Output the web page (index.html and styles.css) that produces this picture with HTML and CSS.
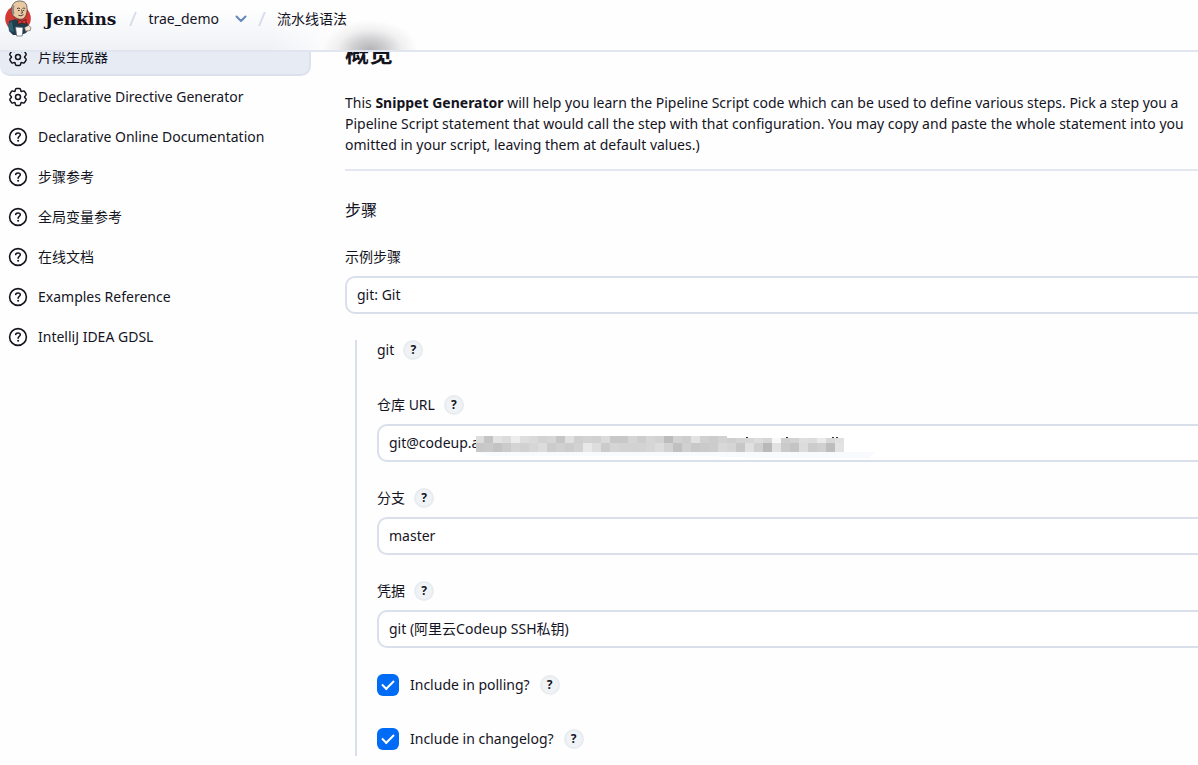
FILE: index.html
```html
<!DOCTYPE html>
<html lang="zh-CN">
<head>
    <meta charset="UTF-8">
    <meta name="viewport" content="width=device-width, initial-scale=1.0">
    <title>流水线语法 - Jenkins</title>
    <link rel="stylesheet" href="styles.css">
</head>
<body>

<!-- shared icons -->
<svg class="sprite" aria-hidden="true">
    <symbol id="icon-gear" viewBox="-10 -10 20 20">
        <g fill="none" stroke="currentColor" stroke-width="1.5" stroke-linecap="round">
            <path id="lobe" d="M-3.300-5.700C-2.200-6.300-3.200-8.500-1.400-8.500H1.400C3.200-8.500 2.200-6.300 3.300-5.700"/>
            <use href="#lobe" transform="rotate(60)"/>
            <use href="#lobe" transform="rotate(120)"/>
            <use href="#lobe" transform="rotate(180)"/>
            <use href="#lobe" transform="rotate(240)"/>
            <use href="#lobe" transform="rotate(300)"/>
            <circle r="2.500"/>
        </g>
    </symbol>
    <symbol id="icon-help" viewBox="0 0 20 20">
        <circle cx="10" cy="10" r="8.4" fill="none" stroke="currentColor" stroke-width="1.6"/>
        <path fill="none" stroke="currentColor" stroke-width="1.5" stroke-linecap="round" stroke-linejoin="round" d="M7.7 7.6C7.8 6.4 8.8 5.9 10 5.9c1.300 0 2.300.8 2.300 1.900 0 1.600-2.200 1.700-2.200 3.500"/>
        <circle cx="10.100" cy="13.800" r="1" fill="currentColor"/>
    </symbol>
</svg>

<header class="header">
    <a class="brand" href="#">
        <svg class="logo" viewBox="0 0 28 38" aria-hidden="true">
            <ellipse cx="14" cy="18.500" rx="12.800" ry="13" fill="#d33833"/>
            <path fill="#1f3d4a" d="M5 21l7-2 4 4 5-2 3 3 1 5-3 4-5 2-8 0-4-4z"/>
            <path fill="#2f5f70" d="M4 24l4-3 2 11-5-1z"/>
            <path fill="#e8c9a3" stroke="#3a322d" stroke-width=".7" d="M8.500 15C6.500 11 7 5 11 2.200c3.200-2 8.500-1.500 10.600 1 2.200 3 1.700 8.800.4 12-1 3-3.500 4.500-6.500 4-2.500-.4-5-1.800-7-4.200z"/>
            <path fill="#8f8983" d="M9.500 5C7.500 7 7 12 9 15.500l1.500-2.500c-1-2.500-.5-5 0-7z"/>
            <path fill="none" stroke="#2b2522" stroke-width=".8" d="M13 8.600q1.500-1 3 0M18.500 8.500q1.300-1 2.700 0M14 10.500h1.700M19 10.500h1.300M17.500 9.500l1 3.500-1.600.3M14.500 15.300q2.500 1.300 5-.6"/>
            <path fill="#d33833" stroke="#461817" stroke-width=".7" d="M14 19.500l4 1.800 4-2v5l-4-1.600-4 1.600z"/>
            <path fill="#fff" stroke="#59666b" stroke-width=".7" d="M11.500 27l7.500.5-.8 8.500h-5.500z"/>
            <path fill="#efe4d6" stroke="#59504a" stroke-width=".6" d="M20.500 27.500l4-2 2.500 2-.7 3-4.800.7z"/>
        </svg>
        <span>Jenkins</span>
    </a>
    <nav class="crumbs">
        <span class="slash"></span>
        <a href="#">trae_demo</a>
        <button class="chevron" type="button" aria-label="trae_demo">
            <svg viewBox="0 0 12 8" aria-hidden="true"><path d="M1.500 1.500L6 6l4.500-4.500"/></svg>
        </button>
        <span class="slash"></span>
        <a href="#">流水线语法</a>
    </nav>
</header>

<div class="page">
    <nav class="sidebar">
        <a class="task active" href="#"><svg><use href="#icon-gear"/></svg>片段生成器</a>
        <a class="task" href="#"><svg><use href="#icon-gear"/></svg>Declarative Directive Generator</a>
        <a class="task" href="#"><svg><use href="#icon-help"/></svg>Declarative Online Documentation</a>
        <a class="task" href="#"><svg><use href="#icon-help"/></svg>步骤参考</a>
        <a class="task" href="#"><svg><use href="#icon-help"/></svg>全局变量参考</a>
        <a class="task" href="#"><svg><use href="#icon-help"/></svg>在线文档</a>
        <a class="task" href="#"><svg><use href="#icon-help"/></svg>Examples Reference</a>
        <a class="task" href="#"><svg><use href="#icon-help"/></svg>IntelliJ IDEA GDSL</a>
    </nav>

    <main class="main">
        <h1>概览</h1>
        <p class="intro">This <b>Snippet Generator</b> will help you learn the Pipeline Script code which can be used to define various steps. Pick a step you a<br>
            Pipeline Script statement that would call the step with that configuration. You may copy and paste the whole statement into you<br>
            omitted in your script, leaving them at default values.)</p>

        <form class="form">
            <h2>步骤</h2>
            <div class="field">
                <label class="label" for="step">示例步骤</label>
                <select class="control" id="step">
                    <option>git: Git</option>
                </select>
            </div>

            <div class="nested">
                <div class="label title">git <button class="help" type="button">?</button></div>

                <div class="field">
                    <div class="label"><label for="url">仓库 URL</label> <button class="help" type="button">?</button></div>
                    <div class="masked">
                        <input class="control" type="text" id="url" value="git@codeup.a">
                        <svg class="mosaic" viewBox="0 0 400 24" aria-hidden="true"></svg>
                    </div>
                </div>

                <div class="field">
                    <div class="label"><label for="branch">分支</label> <button class="help" type="button">?</button></div>
                    <input class="control" type="text" id="branch" value="master">
                </div>

                <div class="field">
                    <div class="label"><label for="credentials">凭据</label> <button class="help" type="button">?</button></div>
                    <select class="control" id="credentials">
                        <option>git (阿里云Codeup SSH私钥)</option>
                    </select>
                </div>

                <div class="check">
                    <input type="checkbox" id="poll" checked>
                    <label for="poll">Include in polling?</label>
                    <button class="help" type="button">?</button>
                </div>
                <div class="check">
                    <input type="checkbox" id="changelog" checked>
                    <label for="changelog">Include in changelog?</label>
                    <button class="help" type="button">?</button>
                </div>
            </div>
        </form>
    </main>
</div>

<script src="mosaic.js"></script>
</body>
</html>
```

FILE: styles.css
```css
* {
    box-sizing: border-box;
}
body {
    margin: 0;
    font-family: "Noto Sans", "Noto Sans CJK SC", sans-serif;
    font-size: 14px;
    line-height: 20px;
    color: #14141f;
    background-color: #fefefe;
    overflow-x: hidden;
}
a {
    color: inherit;
    text-decoration: none;
}
button, input, select {
    font: inherit;
    color: inherit;
}
.sprite {
    position: absolute;
    width: 0;
    height: 0;
}

/* Header */
.header {
    position: fixed;
    top: 0;
    left: 0;
    right: 0;
    z-index: 2;
    display: flex;
    align-items: center;
    height: 52px;
    padding: 0 4px 12px;
    border-bottom: 2px solid #e0e5ef;
    background:
        radial-gradient(ellipse 48px 30px at 370px 50px, rgba(20, 20, 31, 0.32), rgba(20, 20, 31, 0.2) 35%, rgba(20, 20, 31, 0.06) 68%, transparent),
        linear-gradient(to right, transparent 270px, #fefefe 340px),
        linear-gradient(#fefefe 20%, #eff1f6);
    background-clip: border-box, padding-box, padding-box;
    background-repeat: no-repeat;
}
.brand {
    display: flex;
    align-items: center;
    gap: 13px;
    font-family: "DejaVu Serif", serif;
    font-weight: bold;
    font-size: 17px;
}
.logo {
    width: 28px;
    height: 38px;
}
.crumbs {
    display: flex;
    align-items: center;
    margin-left: 12px;
}
.slash {
    width: 2px;
    height: 14px;
    margin: 0 14px 0 4px;
    background: #d5dcea;
    transform: skewX(-22deg);
}
.chevron {
    display: flex;
    margin: 0 10px 0 16px;
    padding: 0;
    border: none;
    background: none;
}
.chevron svg {
    width: 12px;
    height: 8px;
    fill: none;
    stroke: #6288bd;
    stroke-width: 2;
    stroke-linecap: round;
    stroke-linejoin: round;
}

/* Layout */
.page {
    display: flex;
    padding-top: 38px;
}
.sidebar {
    display: flex;
    flex-direction: column;
    gap: 2px;
    flex: 0 0 311px;
}
.task {
    display: flex;
    align-items: center;
    gap: 10px;
    height: 38px;
    padding: 0 8px;
    border-radius: 10px;
}
.task svg {
    width: 20px;
    height: 20px;
}
.task.active {
    border: 2px solid #dce2ed;
    border-left: none;
    background-color: #e7ebf4;
}
.main {
    flex: 1;
    min-width: 0;
    padding-left: 34px;
    overflow: hidden;
}
h1 {
    margin: 0 0 24px;
    font-size: 24px;
    line-height: 30px;
}
.intro {
    margin: 0;
    padding-bottom: 14px;
    border-bottom: 2px solid #e3e7f0;
    line-height: 21px;
    white-space: nowrap;
}
h2 {
    margin: 29px 0 27px;
    font-size: 16px;
    font-weight: normal;
    line-height: 20px;
}

/* Form, runs past the right edge of the window */
.form {
    width: calc(100% + 40px);
}
.label {
    display: flex;
    align-items: center;
    gap: 9px;
    height: 20px;
    margin-bottom: 9px;
}
.field {
    margin-bottom: 26px;
}
.control {
    display: block;
    width: 100%;
    height: 38px;
    padding: 0 10px;
    border: 2px solid #d9dfeb;
    border-radius: 10px;
    background-color: #fff;
    appearance: none;
}
input.control {
    padding-bottom: 2px;
}
.nested {
    margin-left: 10px;
    padding: 0 0 6px 20px;
    border-left: 2px solid #d9dfeb;
}
.title {
    margin-bottom: 35px;
}
.help {
    width: 20px;
    height: 20px;
    padding: 0;
    border: 2px solid #e8ecf0;
    border-radius: 50%;
    background-color: #f0f3f6;
    font-size: 12px;
    font-weight: bold;
    line-height: 16px;
    text-align: center;
}
.masked {
    position: relative;
}
.mosaic {
    position: absolute;
    top: 12px;
    left: 98px;
    width: 400px;
    height: 24px;
}
.check {
    display: flex;
    align-items: center;
    height: 22px;
}
.check + .check {
    margin-top: 32px;
}
.check input {
    display: grid;
    place-items: center;
    width: 22px;
    height: 22px;
    margin: 0 11px 0 0;
    border-radius: 6px;
    background-color: #006bf5;
    appearance: none;
}
.check input:checked::before {
    content: "";
    width: 10px;
    height: 5px;
    margin-bottom: 3px;
    border-left: 2px solid #fff;
    border-bottom: 2px solid #fff;
    transform: rotate(-45deg);
}
.check .help {
    margin-left: 10px;
}
```

FILE: mosaic.js
```javascript
// grey blocks that hide the rest of the repository address
const top1 = "dd c4 e3 dc ed de da d3 d6 c6 e0 cf d3 d1 db c8 c8 d5 cd d6 d2 bc d2 cd e2 d0 cc d2 cf d4 d6 dd d6 f8 cf d3 de dd ea d8 e0".split(" ");
const top2 = "c7 c9 c3 cb d4 d1 d6 dc cc d0 cc d2 e8 dd cb d5 d3 d2 d3 d6 dc d2 c0 d0 c8 ca cc d8 d5 c7 e0 cf b9 e2 ca c4 dc cc d0 bd e3".split(" ");

const svg = document.querySelector(".mosaic");
let shapes = '<path fill="#f8fafd" d="M4 16H400L394 22H300L220 20H12Z"/>';

function addRow(colors, y, height) {
    colors.forEach((c, i) => {
        const x = i === 0 ? 1 : i * 9;
        const cut = height === 7 && i > 27 ? 2 : 0;
        shapes += `<rect x="${x}" y="${y + cut}" width="${i === 0 ? 8 : 9}" height="${height - cut}" fill="#${c}${c}${c}"/>`;
    });
}

addRow(top1, 0, 7);
addRow(top2, 7, 9);

// tips of letters above the blocks
[271, 311, 357, 361].forEach(x => {
    shapes += `<rect x="${x}" y="1" width="2" height="1" fill="#333"/>`;
});
svg.innerHTML = shapes;
```
